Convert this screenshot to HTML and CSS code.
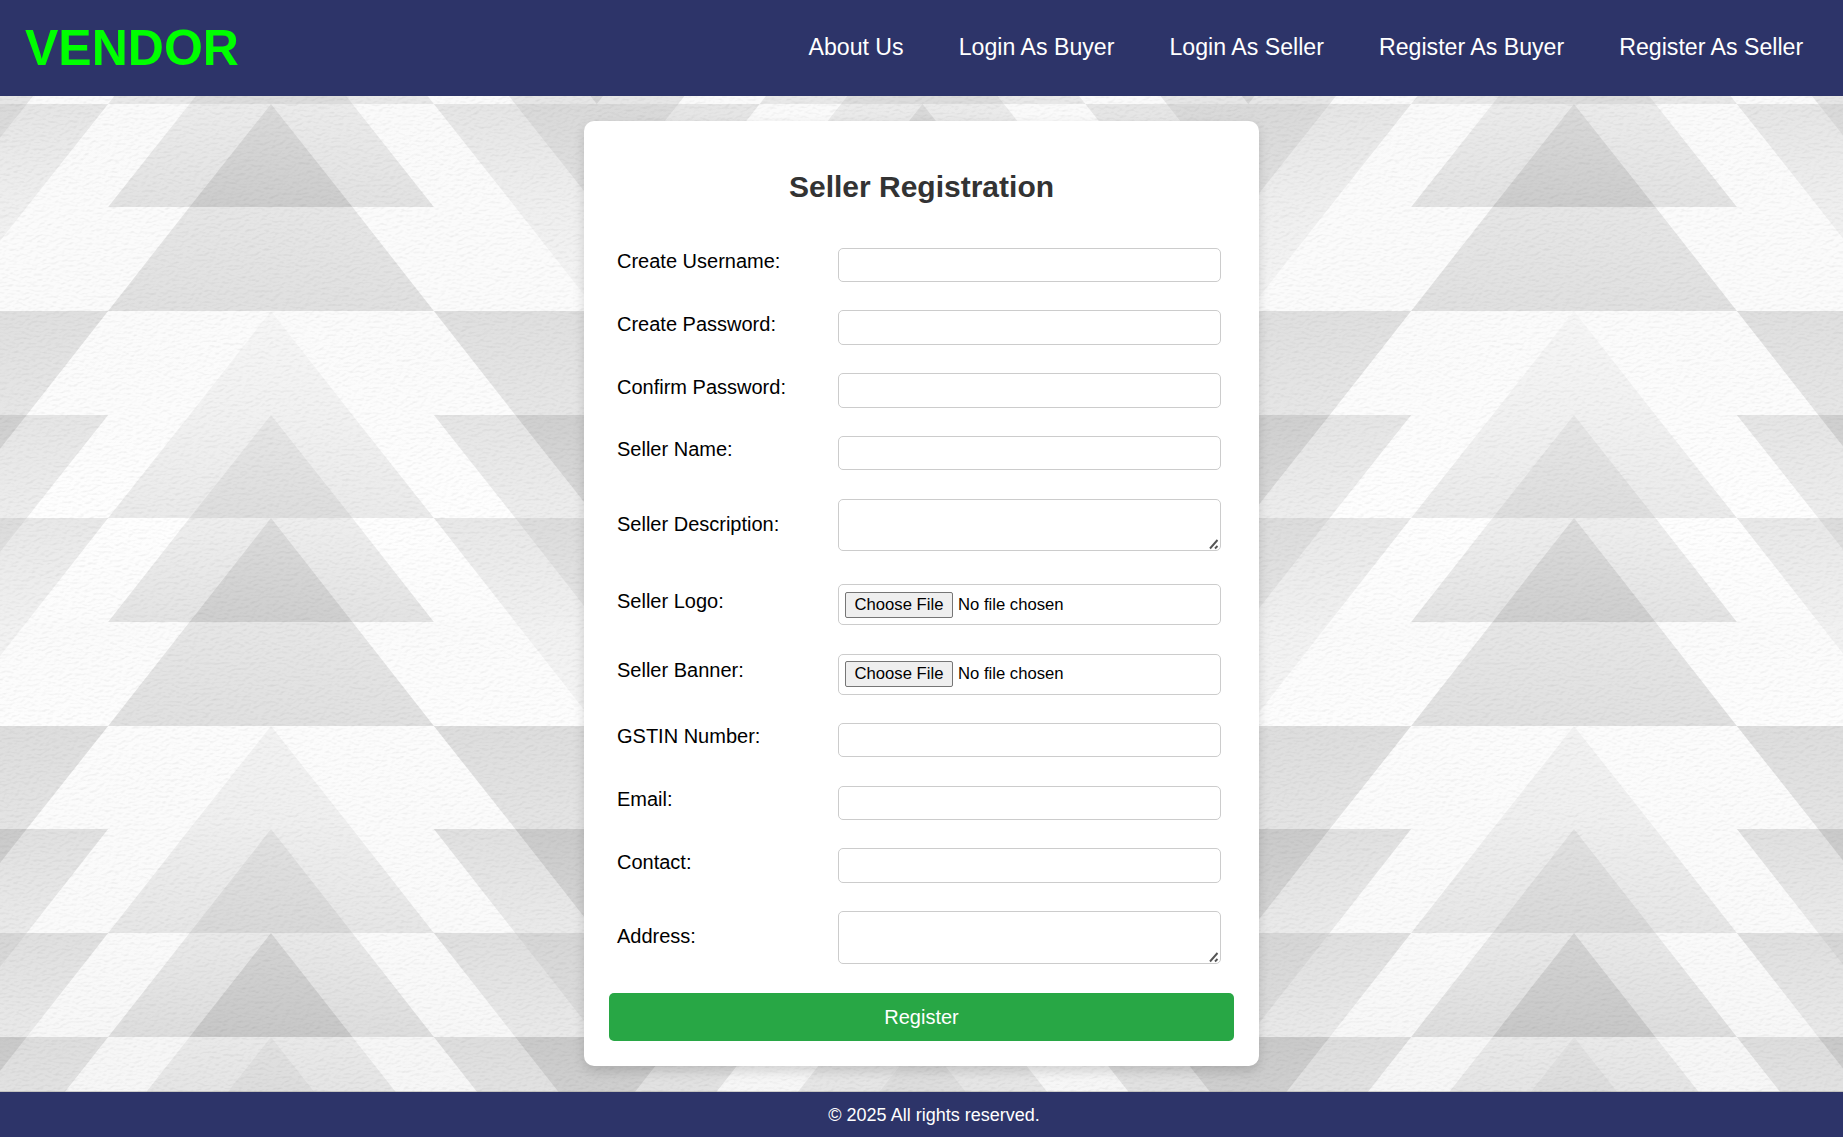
FILE: index.html
```html
<!DOCTYPE html>
<html lang="en">
<head>
<meta charset="utf-8">
<title>Seller Registration</title>
<link rel="stylesheet" href="styles.css">
</head>
<body>
<header class="header">
  <h1 class="brand">VENDOR</h1>
  <nav class="nav">
    <a href="#">About Us</a>
    <a href="#">Login As Buyer</a>
    <a href="#">Login As Seller</a>
    <a href="#">Register As Buyer</a>
    <a href="#">Register As Seller</a>
  </nav>
</header>
<main class="main">
  <svg class="backdrop" viewBox="0 96 1843 996" preserveAspectRatio="none" aria-hidden="true">
    <defs>
      <filter id="paper" x="0" y="0" width="100%" height="100%" color-interpolation-filters="sRGB">
        <feTurbulence type="fractalNoise" baseFrequency="0.2 0.36" numOctaves="2" seed="4"/>
        <feColorMatrix values="0 0 0 0 0  0 0 0 0 0  0 0 0 0 0  0 0 0 1 0" result="n"/>
        <feDiffuseLighting in="n" surfaceScale="0.12" diffuseConstant="1.3" lighting-color="#fff">
          <feDistantLight azimuth="250" elevation="50"/>
        </feDiffuseLighting>
      </filter>
    </defs>
    <g id="pattern"></g>
    <rect class="grain" x="0" y="96" width="1843" height="996" filter="url(#paper)"/>
  </svg>
  <form class="card">
    <h2 class="title">Seller Registration</h2>
    <div class="row"><label for="f1">Create Username:</label><input id="f1" class="field" type="text"></div>
    <div class="row"><label for="f2">Create Password:</label><input id="f2" class="field" type="password"></div>
    <div class="row"><label for="f3">Confirm Password:</label><input id="f3" class="field" type="password"></div>
    <div class="row"><label for="f4">Seller Name:</label><input id="f4" class="field" type="text"></div>
    <div class="row row-area"><label for="f5">Seller Description:</label><textarea id="f5" class="field"></textarea></div>
    <div class="row row-file"><label for="f6">Seller Logo:</label><input id="f6" class="field" type="file"></div>
    <div class="row row-file row-banner"><label for="f7">Seller Banner:</label><input id="f7" class="field" type="file"></div>
    <div class="row"><label for="f8">GSTIN Number:</label><input id="f8" class="field" type="text"></div>
    <div class="row"><label for="f9">Email:</label><input id="f9" class="field" type="email"></div>
    <div class="row"><label for="f10">Contact:</label><input id="f10" class="field" type="text"></div>
    <div class="row row-area row-last"><label for="f11">Address:</label><textarea id="f11" class="field"></textarea></div>
    <button class="submit" type="button">Register</button>
  </form>
</main>
<footer class="footer">© 2025 All rights reserved.</footer>
<script src="pattern.js"></script>
</body>
</html>
```
FILE: styles.css
```css
* { box-sizing: border-box; }
body {
  margin: 0;
  height: 1137px;
  display: flex;
  flex-direction: column;
  overflow: hidden;
  font-family: "Liberation Sans", Arial, sans-serif;
  font-size: 20px;
  line-height: 23px;
  color: #000;
}
.header {
  height: 96px;
  flex: none;
  display: flex;
  align-items: center;
  justify-content: space-between;
  padding: 0 39.8px 0 25px;
  background: #2d3469;
}
.brand {
  margin: 0;
  font-size: 50px;
  line-height: 58px;
  color: #0f0;
}
.nav { display: flex; gap: 55.1px; padding-bottom: 2px; }
.nav a {
  color: #fff;
  font-size: 23.15px;
  line-height: 28px;
  text-decoration: none;
}
.main {
  position: relative;
  height: 996px;
  flex: none;
  display: flex;
  justify-content: center;
  align-items: flex-start;
  padding: 25px 0 0;
}
.main::after {
  content: "";
  position: absolute;
  left: 0;
  right: 0;
  bottom: 0;
  height: 1px;
  background: rgba(150, 150, 145, 0.4);
}
.backdrop {
  position: absolute;
  inset: 0;
  width: 100%;
  height: 100%;
  isolation: isolate;
}
.grain { mix-blend-mode: multiply; }
.card {
  position: relative;
  width: 675px;
  height: 945px;
  padding: 49px 25px 25px;
  border-radius: 10px;
  background: #fff;
  box-shadow: 0 5px 12px rgba(0, 0, 0, 0.15);
}
.title {
  margin: 0 0 43.6px;
  font-size: 30px;
  line-height: 34px;
  text-align: center;
  color: #333;
}
.row {
  display: grid;
  grid-template-columns: 221px 383px;
  align-items: start;
  padding-left: 8px;
  height: 62.8px;
}
.row label { padding-top: 2.4px; }
.row-area { height: 85.2px; }
.row-area label { padding-top: 14px; }
.row-file { height: 69.8px; }
.row-file label { padding-top: 6px; }
.row-banner { height: 69px; }
.row-banner label { padding-top: 5px; }
.row-last { height: 81.8px; }
.field {
  display: block;
  width: 100%;
  height: 34.4px;
  margin: 0;
  padding: 6px;
  border: 1px solid #ccc;
  border-radius: 5px;
  background: #fff;
  font: 16.667px/20px "Liberation Sans", Arial, sans-serif;
  color: #000;
}
textarea.field { height: 52.4px; }
textarea.field::-webkit-resizer {
  background: url("data:image/svg+xml,%3Csvg xmlns='http://www.w3.org/2000/svg' width='15' height='15'%3E%3Cpath d='M5 13.5l7.500-8.500M10 13.500l2.500-2.500' fill='none' stroke='%23555' stroke-width='1.900'/%3E%3C/svg%3E") right bottom no-repeat;
}
.field[type="file"] { height: 41px; padding: 7px 6px; }
.row-banner .field[type="file"] { padding: 6px 6px 8px; }
.field::file-selector-button {
  width: 108px;
  height: 26px;
  margin: 0 5px 0 0;
  padding: 0;
  border: 1px solid #767676;
  border-radius: 2px;
  background: #efefef;
  font: inherit;
  color: #000;
}
.submit {
  display: block;
  width: 100%;
  height: 48px;
  padding: 1px 0 0;
  border: 0;
  border-radius: 5px;
  background: #28a745;
  font: 20px/23px "Liberation Sans", Arial, sans-serif;
  color: #fff;
}
.footer {
  flex: 1;
  display: flex;
  align-items: center;
  justify-content: center;
  padding: 2px 0 0 25px;
  background: #2d3469;
  color: #fff;
  font-size: 18px;
}
```
FILE: pattern.js
```js
// Each band: top edge, then [half-width at the top in units, top grey, bottom grey], widest first.
const bands = [
  [0, [4, 'd4', 'd4'], [3, 'e6', 'e6'], [2, 'fb', 'fa'], [1, 'ea', 'e8'], [0, 'dc', 'dc']],
  [104, [4, 'd9', 'e0'], [3, 'e5', 'ef'], [2, 'fa', 'fb'], [1, 'eb', 'e2'], [0, 'da', 'cc']],
  [207, [4, 'ef', 'f5'], [3, 'fb', 'fb'], [1, 'e6', 'e0']],
  [311, [4, 'df', 'e6'], [2, 'fb', 'fc'], [0, 'f6', 'f1']],
  [415, [4, 'cf', 'da'], [3, 'e5', 'ed'], [2, 'fc', 'fe'], [1, 'f1', 'ea'], [0, 'e6', 'dd']],
  [518, [4, 'dc', 'e4'], [3, 'e8', 'f0'], [2, 'fe', 'fc'], [1, 'ee', 'e3'], [0, 'dc', 'ce']],
  [622, [4, 'f1', 'f5'], [3, 'fb', 'fd'], [1, 'e6', 'e0']],
  [726, [4, 'dd', 'e4'], [2, 'fc', 'fb'], [0, 'f2', 'ef']],
  [829, [4, 'ca', 'd6'], [3, 'e0', 'ea'], [2, 'fb', 'fa'], [1, 'ee', 'e6'], [0, 'e1', 'd8']],
  [933, [4, 'd6', 'dd'], [3, 'df', 'e9'], [2, 'fa', 'f7'], [1, 'e9', 'dd'], [0, 'd4', 'c7']],
  [1037, [4, 'c9', 'd4'], [3, 'dd', 'e6'], [2, 'f6', 'f7'], [1, 'e9', 'e1'], [0, 'e1', 'd8']]
];
const unit = 81.43;
const centers = [271, 922.5, 1574];
let defs = '';
let shapes = '';
bands.forEach(([y, ...layers], b) => {
  const top = b === 0 ? 0.4 : y;
  const end = b + 1 < bands.length ? bands[b + 1][0] : 1140.5;
  layers.forEach(([k, from, to], i) => {
    const id = `g${b}-${i}`;
    defs += `<linearGradient id="${id}" x2="0" y2="1"><stop stop-color="#${from.repeat(3)}"/><stop offset="1" stop-color="#${to.repeat(3)}"/></linearGradient>`;
    centers.forEach(c => {
      // The full-width layer overlaps its neighbour slightly so no seam shows.
      const a = k === 4 ? k * unit + 1 : k * unit;
      const w = k === 4 ? a : a + unit;
      shapes += `<polygon fill="url(#${id})" points="${c - a},${top} ${c + a},${top} ${c + w},${end} ${c - w},${end}"/>`;
    });
  });
});
document.getElementById('pattern').innerHTML = `<defs>${defs}</defs>${shapes}`;
```
